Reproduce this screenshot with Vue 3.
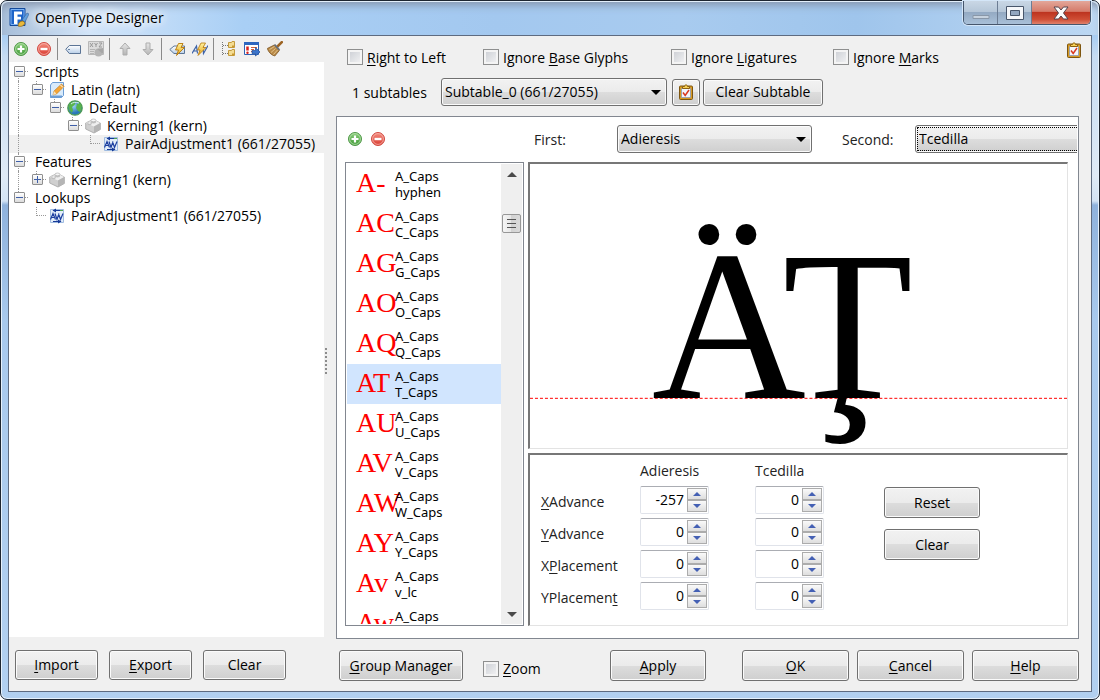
<script setup>
import { ref } from 'vue'

const tools = [
  ['add', 'Add'], ['remove', 'Remove'], null,
  ['tag', 'Rename'], ['xyz', 'Edit code'], null,
  ['up', 'Move up'], ['down', 'Move down'], null,
  ['tagflash', 'Auto tag'], ['avflash', 'Auto kern'], null,
  ['folders', 'Tree view'], ['report', 'Report'], ['broom', 'Clean up'],
]

const tree = [
  { cells: ['open start'], text: 'Scripts' },
  { cells: ['line', 'open last'], icon: 'script', text: 'Latin (latn)' },
  { cells: ['line', '', 'open last'], icon: 'globe', text: 'Default' },
  { cells: ['line', '', '', 'open last'], icon: 'brick', text: 'Kerning1 (kern)' },
  { cells: ['line', '', '', '', 'leaf last'], icon: 'pair', text: 'PairAdjustment1 (661/27055)', selected: true },
  { cells: ['open'], text: 'Features' },
  { cells: ['line', 'closed last'], icon: 'brick', text: 'Kerning1 (kern)' },
  { cells: ['open last'], text: 'Lookups' },
  { cells: ['', 'leaf last'], icon: 'pair', text: 'PairAdjustment1 (661/27055)' },
]

const flags = [
  ['', 'R', 'ight to Left'],
  ['Ignore ', 'B', 'ase Glyphs'],
  ['Ignore ', 'L', 'igatures'],
  ['Ignore ', 'M', 'arks'],
]

const pairs = [
  ['A-', 'hyphen'], ['AC', 'C_Caps'], ['AG', 'G_Caps'], ['AO', 'O_Caps'],
  ['AQ', 'Q_Caps'], ['AT', 'T_Caps'], ['AU', 'U_Caps'], ['AV', 'V_Caps'],
  ['AW', 'W_Caps'], ['AY', 'Y_Caps'], ['Av', 'v_lc'], ['Aw', 'w_lc'],
]
const selectedPair = ref(5)

const values = ref([
  { id: 'xadv', label: ['', 'X', 'Advance'], v: [-257, 0] },
  { id: 'yadv', label: ['', 'Y', 'Advance'], v: [0, 0] },
  { id: 'xpl', label: ['X', 'P', 'lacement'], v: [0, 0] },
  { id: 'ypl', label: ['YPlacemen', 't', ''], v: [0, 0] },
])
</script>

<template>
  <svg class="defs" aria-hidden="true">
    <defs>
      <linearGradient id="g-green" x2="0" y2="1"><stop stop-color="#8ccf7c" /><stop offset="1" stop-color="#3f9a36" /></linearGradient>
      <linearGradient id="g-red" x2="0" y2="1"><stop stop-color="#f58d80" /><stop offset="1" stop-color="#d83a30" /></linearGradient>
      <linearGradient id="g-grey" x2="0" y2="1"><stop stop-color="#e6e6e6" /><stop offset="1" stop-color="#b4b4b4" /></linearGradient>
      <linearGradient id="g-tag" x2="0" y2="1"><stop stop-color="#fff" /><stop offset="1" stop-color="#b9cfe8" /></linearGradient>
      <linearGradient id="g-gold" x2="0" y2="1"><stop stop-color="#fff3a0" /><stop offset="1" stop-color="#e8a414" /></linearGradient>
      <radialGradient id="g-sea" cx=".4" cy=".35"><stop stop-color="#9ed4f2" /><stop offset="1" stop-color="#2a78b8" /></radialGradient>
    </defs>
    <symbol id="add" viewBox="0 0 16 16">
      <circle cx="8" cy="8" r="6.5" fill="url(#g-green)" stroke="#4f9748" /><circle cx="8" cy="8" r="5.4" fill="none" stroke="#b9e2ae" stroke-width=".8" />
      <path d="M8 4.5v7M4.5 8h7" stroke="#fff" stroke-width="2.2" />
    </symbol>
    <symbol id="remove" viewBox="0 0 16 16">
      <circle cx="8" cy="8" r="6.5" fill="url(#g-red)" stroke="#d04a42" /><circle cx="8" cy="8" r="5.4" fill="none" stroke="#f8b5ac" stroke-width=".8" />
      <path d="M4.5 8h7" stroke="#fff" stroke-width="2.4" />
    </symbol>
    <symbol id="tag" viewBox="0 0 16 16">
      <path d="M.8 8.2 4.3 4.5h11.2v8H4.3z" fill="url(#g-tag)" stroke="#5c7596" /><path d="M3 8.5h2" stroke="#6d86a6" />
    </symbol>
    <symbol id="xyz" viewBox="0 0 16 16">
      <path d="M.5.5h15v13H.5z" fill="#dcdcdc" stroke="#b8b8b8" />
      <path d="m2 2 3 4m0-4-3 4M6.500 2 8 4m1.500-2L8 4v2M11 2h3l-3 4h3" fill="none" stroke="#999" />
      <path d="M2 8.500h5M2 10.500h4M2 12.500h4" stroke="#b5b5b5" /><circle cx="10.500" cy="11.500" r="4" fill="#b4b4b4" /><path d="m9 8 6-1v6z" fill="#a6a6a6" />
    </symbol>
    <symbol id="up" viewBox="0 0 16 16"><path d="m8 2 5 5.500h-3v6.500H6V7.500H3z" fill="url(#g-grey)" stroke="#adadad" /></symbol>
    <symbol id="down" viewBox="0 0 16 16"><path d="M8 14 3 8.500h3V2h4v6.500h3z" fill="url(#g-grey)" stroke="#adadad" /></symbol>
    <symbol id="tagflash" viewBox="0 0 16 16">
      <path d="M.8 8.500 5 5h10.500v7.500H5z" fill="url(#g-tag)" stroke="#5c7596" />
      <path d="M9.500 2.500H14L12 6.500h3.500l-8 8 2-5.500H6.500z" fill="url(#g-gold)" stroke="#b77708" stroke-width=".9" />
    </symbol>
    <symbol id="avflash" viewBox="0 0 16 16">
      <path d="M0 12.500 4.500 5l1 7.500M2 10h3.500M11 5l.5 7.500L16 4.500" fill="none" stroke="#3c62a8" stroke-width="1.200" />
      <path d="M9 2h4.500l-2.500 4.500h3l-8 8 2-5.500H5.500z" fill="url(#g-gold)" stroke="#b77708" stroke-width=".8" />
    </symbol>
    <symbol id="folders" viewBox="0 0 16 16">
      <path d="M1.500 1v13M2 4.500h6M2 12.500h6" fill="none" stroke="#777" stroke-dasharray="1 1" />
      <path d="M7.500 1.500h3l.5-1h2.500v6h-6zM7.500 9.500h3l.5-1h2.500v6h-6z" fill="#f4dc92" stroke="#c39a3c" /><path d="M11 4.500h2v2h-2zM11 12.500h2v2h-2z" fill="#c9982f" />
    </symbol>
    <symbol id="report" viewBox="0 0 16 16">
      <path d="M.5 1.500h14v12H.5z" fill="#fff" stroke="#2f62b4" /><path d="M0 1h15v3H0z" fill="#2d66bf" />
      <path d="M3.500 5.500v4" stroke="#d8201c" stroke-width="2.500" /><circle cx="3.500" cy="11.700" r="1.200" fill="#d8201c" />
      <path d="M7 6.500h6M7 8.500h3M7 10.500h2" stroke="#d2603a" /><path d="M8 9.500h3.500v-3L16 11l-4.500 4v-2.500H8z" fill="#3b74cc" stroke="#1f4b94" stroke-width=".7" />
    </symbol>
    <symbol id="broom" viewBox="0 0 16 16">
      <path d="m14.800 1.200-5 5" stroke="#9c6323" stroke-width="2.600" stroke-linecap="round" />
      <path d="m.3 7.500 7-3.500 5 5.500-4.500 5.500C4 14 1.500 11 .3 7.500z" fill="#b98a48" stroke="#7d5522" stroke-width=".8" />
      <path d="m2.500 8.500 5-3M4 11.500l4.500-4M6.500 13.500l4-4.500" stroke="#ecd09a" stroke-width=".8" /><path d="m7.500 3.500 5 5.500" stroke="#68717c" stroke-width="1.800" />
    </symbol>
    <symbol id="script" viewBox="0 0 16 16">
      <path d="M3.500.500h11v13l-2 2h-11V3z" fill="#d9ebfb" stroke="#6b9cd4" /><path d="M1 13.500h12v2H1z" fill="#6d9ed6" />
      <path d="m5 9 7.500-7 2.500 2.500L7.500 12 4 13z" fill="#f5a536" stroke="#b87820" stroke-width=".6" /><path d="m5 9 2.500 3L4 13z" fill="#f6e3bd" /><path d="m11.500 3 2.500 2.500" stroke="#fff" />
    </symbol>
    <symbol id="globe" viewBox="0 0 16 16">
      <circle cx="8" cy="8" r="7.200" fill="url(#g-sea)" stroke="#4e9a50" stroke-width="1.300" />
      <path d="M2 5c2-4 5-4 7-3L7.500 5 5 7l1 3-1 3C2.500 11 1 8 2 5zM10 4l3-1c2 3 2 6 0 9l-2-1-2-3z" fill="#58b44c" /><path d="M4 4c2-2 5-2 8-1" stroke="#d4f0f4" fill="none" />
    </symbol>
    <symbol id="brick" viewBox="0 0 16 16">
      <path d="M.7 5 8 1.500 15.300 5v6.500L9 15 .7 11z" fill="#cfcfcf" stroke="#a2a2a2" stroke-width=".8" /><path d="M.7 5 9 8.500 15.300 5 8 1.500z" fill="#efefef" />
      <path d="M9 8.500 15.300 5v6.500L9 15z" fill="#b5b5b5" /><path d="M6 2.500v2c1 1.200 4 1.200 5 0v-2zM2.500 5v1.500c1 1 3 1 4 0V5z" fill="#c2c2c2" />
      <ellipse cx="8.500" cy="2.400" rx="2.500" ry="1.400" fill="#f6f6f6" stroke="#aaa" stroke-width=".6" /><ellipse cx="4.500" cy="5" rx="2" ry="1.200" fill="#f6f6f6" stroke="#aaa" stroke-width=".6" />
    </symbol>
    <symbol id="pair" viewBox="0 0 16 16">
      <path d="M1.500 1.500h13v13h-13z" fill="#e3edf9" stroke="#9fbbe0" />
      <path d="M1.500 11.500 4 5.500l2.500 6M2.500 9.500h3M6 5.500l2 6 2-6M9.500 5.500l2 6 2.500-6" fill="none" stroke="#1d3fa0" stroke-width="1.200" />
      <path d="M4 2.500h8M4 13.500h8" stroke="#173a98" /><path d="m7 .500-3.500 2L7 4.500zM9 11.500l3.500 2-3.500 2z" fill="#173a98" /><path d="M11 2.500h3" stroke="#4da34d" />
    </symbol>
    <symbol id="clip" viewBox="0 0 16 16">
      <rect x="1.500" y="2" width="13" height="13.500" rx="1" fill="#d79a22" stroke="#7d5510" /><path d="M3.500 4.500h9v9h-9z" fill="#f3f6fc" stroke="#8a9ab8" stroke-width=".8" />
      <path d="M4.500 4.500V2.500h2C7 .300 9 .300 9.500 2.500h2v2z" fill="#f4cf57" stroke="#8c6010" /><path d="m5 8.500 2.200 3L11 6" fill="none" stroke="#da3a20" stroke-width="1.500" />
    </symbol>
  </svg>

  <div class="window">
    <header class="titlebar">
      <svg class="appicon" viewBox="0 0 20 20" aria-hidden="true">
        <path d="M1 .500h15v17H1z" fill="#1e64c8" stroke="#144a9a" /><path d="M2 1.500h13v15H2z" fill="none" stroke="#7fb4f4" />
        <path d="M5 3.500h8v3H8.500v2.200H12v2.800H8.500V16H5z" fill="#fff" />
        <path d="m13 12 5-7 2 1-4 8z" fill="#5f9fe0" stroke="#345f92" stroke-width=".6" /><path d="M9 18c0-3 2-5 5-5l2 2c-1 3-4 4-7 3z" fill="#e9b93c" stroke="#84621a" stroke-width=".7" />
      </svg>
      <h1>OpenType Designer</h1>
      <div class="wbtns">
        <button aria-label="Minimize"><svg width="18" height="6" viewBox="0 0 18 6"><path d="M1 1.500h16v3H1z" fill="#c7d2de" stroke="#8997a8" /></svg></button>
        <button class="max" aria-label="Maximize"><svg width="18" height="14" viewBox="0 0 18 14"><path d="M.5.500h17v13H.5z" fill="#f5f7fa" stroke="#48566b" /><path d="M4.500 4.500h9v5h-9z" fill="#93a7c0" stroke="#48566b" /></svg></button>
        <button class="close" aria-label="Close"><svg width="16" height="14" viewBox="0 0 16 14"><path d="M1 1h4.500L8 4l2.500-3H15l-4.500 6 4.500 6h-4.500L8 10l-2.500 3H1l4.500-6z" fill="#fbfbfb" stroke="#54434c" /></svg></button>
      </div>
    </header>

    <main class="client">
      <section class="left">
        <div class="toolbar">
          <template v-for="(t, i) in tools" :key="i">
            <button v-if="t" class="tool" :aria-label="t[1]"><svg class="i16"><use :href="'#' + t[0]" /></svg></button>
            <span v-else class="sep"></span>
          </template>
        </div>
        <ul class="tree">
          <li v-for="(n, i) in tree" :key="i" :class="{ selected: n.selected }">
            <span v-for="(c, k) in n.cells" :key="k" class="cell" :class="c"><i v-if="/open|closed/.test(c)"></i></span>
            <svg v-if="n.icon" class="i16 nodeicon"><use :href="'#' + n.icon" /></svg>
            <span class="nodetext">{{ n.text }}</span>
          </li>
        </ul>
        <div class="leftbtns">
          <button class="btn"><u>I</u>mport</button>
          <button class="btn"><u>E</u>xport</button>
          <button class="btn">Clear</button>
        </div>
      </section>

      <div class="splitter"><span></span></div>

      <section class="right">
        <div class="flags">
          <label v-for="f in flags" :key="f[1]"><input type="checkbox" /><span>{{ f[0] }}<u>{{ f[1] }}</u>{{ f[2] }}</span></label>
          <button class="tool top" aria-label="Validate"><svg class="i16"><use href="#clip" /></svg></button>
        </div>
        <div class="subrow">
          <label for="subtable">1 subtables</label>
          <div class="combo sub">
            <select id="subtable"><option>Subtable_0 (661/27055)</option></select>
            <svg class="arrow" viewBox="0 0 10 5"><path d="M0 0h10L5 5z" /></svg>
          </div>
          <button class="btn iconbtn" aria-label="Validate subtable"><svg class="i16"><use href="#clip" /></svg></button>
          <button class="btn clearsub">Clear Subtable</button>
        </div>

        <div class="panel">
          <div class="pairbar">
            <div class="pairtools">
              <button class="tool" aria-label="Add pair"><svg class="i16"><use href="#add" /></svg></button>
              <button class="tool" aria-label="Remove pair"><svg class="i16"><use href="#remove" /></svg></button>
            </div>
            <label class="firstlabel" for="first">First:</label>
            <div class="combo firstbox">
              <select id="first"><option>Adieresis</option></select>
              <svg class="arrow" viewBox="0 0 10 5"><path d="M0 0h10L5 5z" /></svg>
            </div>
            <label class="secondlabel" for="second">Second:</label>
            <div class="combo secondbox"><select id="second"><option>Tcedilla</option></select></div>
          </div>

          <div class="work">
            <div class="listbox">
              <ul>
                <li v-for="(p, i) in pairs" :key="p[0]" :class="{ selected: i === selectedPair }" @click="selectedPair = i">
                  <span class="glyphs">{{ p[0] }}</span>
                  <span class="names">A_Caps<br />{{ p[1] }}</span>
                </li>
              </ul>
              <div class="scroll">
                <button aria-label="Scroll up"><svg width="10" height="5" viewBox="0 0 10 5"><path d="M0 5h10L5 0z" /></svg></button>
                <span class="thumb"><i></i><i></i><i></i></span>
                <button class="dn" aria-label="Scroll down"><svg width="10" height="5" viewBox="0 0 10 5"><path d="M0 0h10L5 5z" /></svg></button>
              </div>
            </div>

            <div class="side">
              <div class="sunken preview">
                <svg viewBox="0 0 538 284">
                  <path class="base" d="M-2000 234.500h5000" />
                  <text x="122" y="234">Ä</text>
                  <text x="253" y="234">Ţ</text>
                </svg>
              </div>
              <div class="sunken values">
                <div class="grid">
                  <span></span><span class="head">Adieresis</span><span class="head">Tcedilla</span>
                  <template v-for="r in values" :key="r.id">
                    <label :for="r.id">{{ r.label[0] }}<u>{{ r.label[1] }}</u>{{ r.label[2] }}</label>
                    <div v-for="k in [0, 1]" :key="k" class="spin">
                      <input type="number" :id="k ? r.id + '2' : r.id" v-model="r.v[k]" :aria-label="k ? 'Tcedilla ' + r.label.join('') : null" />
                      <span class="steps">
                        <button aria-label="Increase" @click="r.v[k]++"><svg width="8" height="4" viewBox="0 0 8 4"><path d="M0 4h8L4 0z" /></svg></button>
                        <button aria-label="Decrease" @click="r.v[k]--"><svg width="8" height="4" viewBox="0 0 8 4"><path d="M0 0h8L4 4z" /></svg></button>
                      </span>
                    </div>
                  </template>
                </div>
                <div class="vbtns"><button class="btn">Reset</button><button class="btn">Clear</button></div>
              </div>
            </div>
          </div>
        </div>

        <div class="actions">
          <button class="btn gm"><u>G</u>roup Manager</button>
          <label class="zoom"><input type="checkbox" /><span><u>Z</u>oom</span></label>
          <button class="btn apply"><u>A</u>pply</button>
          <button class="btn wide"><u>O</u>K</button>
          <button class="btn wide"><u>C</u>ancel</button>
          <button class="btn wide"><u>H</u>elp</button>
        </div>
      </section>
    </main>
  </div>
</template>

<style>
body { margin: 0; background: #fff; }
</style>

<style scoped>
* { box-sizing: border-box; }
.defs { position: absolute; width: 0; height: 0; }
.window {
  height: 100vh; display: flex; flex-direction: column; padding: 0 7px 7px; border: 1px solid #1d2530; border-radius: 7px;
  background: linear-gradient(180deg, #b9d2ee 0, #a9cdf2 35px, #c6dbf2 55px, #dfeaf6 175px, #d3e3f4 200px, #8fb2dc 204px, #a8c9ed 320px, #b2d0f0 100%);
  box-shadow: inset 0 0 0 1px #e6f1fc;
  font: 14px/18px "Open Sans", "Noto Sans", sans-serif; color: #000;
}
button, input, select { font: inherit; color: inherit; margin: 0; }
button { padding: 0; }
u { text-underline-offset: 2px; text-decoration-thickness: 1px; }
.titlebar {
  flex: none; height: 34px; margin: 0 -6px; padding: 0 7px; display: flex; align-items: center; border-radius: 6px 6px 0 0;
  background: linear-gradient(90deg, #a6bdd8 0, #d2e5f9 8%, #a9cff5 22%, #a3c8ef 45%, #a8cbef 62%, #9fc5ec 78%, #bcd7f2 100%);
  box-shadow: inset 0 1px #e3effb, inset 0 9px 9px -5px #8795ac;
}
.appicon { width: 20px; height: 20px; }
h1 { margin: 0 0 0 6px; font-size: 14px; font-weight: 400; text-shadow: 0 0 8px #fff, 0 0 10px #fff, 0 0 14px #fff; }
.wbtns { margin-left: auto; align-self: flex-start; display: flex; border: 1px solid #46566c; border-top: 0; border-radius: 0 0 5px 5px; overflow: hidden; box-shadow: 0 0 0 1px #d4e6f8; }
.wbtns button { width: 34px; height: 23px; border: 0; border-right: 1px solid #6c7d94; display: grid; place-items: center; background: linear-gradient(#c9d7e5 0, #b4c5d7 50%, #94aac3 50%, #a9c0d8); }
.wbtns button:first-child { padding-top: 8px; }
.wbtns .close { width: 58px; border: 0; background: linear-gradient(#e3a79a 0, #d57b6a 45%, #bd3420 50%, #cf4e35 80%, #e0826c); }
.client { flex: 1; min-height: 0; display: flex; background: #f0f0f0; border: 1px solid #5e6b80; }
.i16 { display: block; width: 16px; height: 16px; flex: none; }
.tool { border: 0; background: none; width: 16px; height: 16px; flex: none; }

.left { flex: 0 0 315px; display: flex; flex-direction: column; }
.toolbar { height: 26px; display: flex; align-items: center; padding-left: 4px; flex: none; }
.toolbar .tool { margin-right: 7px; }
.sep { width: 1px; height: 22px; margin: 0 7px 0 -2px; background: #8a8a8a; }
.tree { flex: 1; margin: 0; padding: 1px 0 0; list-style: none; background: #fff; }
.tree li { display: flex; height: 18px; padding-left: 1px; align-items: center; }
.tree li.selected { background: #f0f0f0; }
.cell { width: 18px; height: 18px; position: relative; }
.cell.line::before, .cell.open::before, .cell.closed::before, .cell.leaf::before { content: ""; position: absolute; left: 8px; top: 0; bottom: 0; border-left: 1px dotted #999; }
.cell.last::before { bottom: 9px; }
.cell.start::before { top: 9px; }
.cell.open::after, .cell.closed::after, .cell.leaf::after { content: ""; position: absolute; left: 9px; right: 0; top: 8px; border-top: 1px dotted #999; }
.cell i { position: absolute; z-index: 1; left: 4px; top: 3px; width: 11px; height: 11px; border: 1px solid #8f8f8f; border-radius: 1px; background: linear-gradient(#3f5fa8, #3f5fa8) center / 7px 1px no-repeat, linear-gradient(#fff, #dcdcdc); }
.cell.closed i { background: linear-gradient(#3f5fa8, #3f5fa8) center / 7px 1px no-repeat, linear-gradient(#3f5fa8, #3f5fa8) center / 1px 7px no-repeat, linear-gradient(#fff, #dcdcdc); }
.nodeicon { margin: 0 -1px 0 3px; }
.nodetext { margin-left: 7px; white-space: nowrap; }
.leftbtns { display: flex; gap: 11px; padding: 13px 6px 11px; }
.btn { height: 31px; border: 1px solid #707070; border-radius: 3px; background: linear-gradient(#f2f2f2, #ebebeb 50%, #dddddd 50%, #cfcfcf); box-shadow: inset 0 0 0 1px #fbfbfb; white-space: nowrap; }
.leftbtns .btn { width: 83px; height: 30px; }

.splitter { flex: 0 0 12px; display: flex; align-items: center; padding: 0 0 6px 1px; }
.splitter span { width: 2px; height: 26px; background: repeating-linear-gradient(#8c8c8c 0 2px, #f0f0f0 2px 4px); }

.right { flex: 1; min-width: 0; display: flex; flex-direction: column; padding-right: 12px; }
.flags { display: grid; grid-template-columns: 136px 188px 162px 1fr 16px; align-items: center; height: 36px; margin: 6px -3px 0 0; padding: 0 0 6px 11px; }
label { white-space: nowrap; }
.flags label, .zoom { display: flex; align-items: center; gap: 4px; }
.flags label span { padding-top: 1px; }
.top { align-self: start; }
input[type="checkbox"] { appearance: none; flex: none; width: 16px; height: 16px; border: 1px solid #8e8f8f; background: linear-gradient(135deg, #c9ccd2, #f5f5f6); box-shadow: inset 0 0 0 2px #f4f4f4; }
.subrow { display: flex; align-items: center; height: 28px; padding-left: 16px; flex: none; }
.subrow label { width: 89px; padding-top: 2px; }
.sub { width: 226px; margin-right: 5px; }
.combo { position: relative; height: 28px; }
select { appearance: none; width: 100%; height: 28px; padding: 0 20px 0 3px; border: 1px solid #707070; border-radius: 3px; background: linear-gradient(#f2f2f2, #ebebeb 50%, #dddddd 50%, #cfcfcf); box-shadow: inset 0 0 0 1px #fbfbfb; }
.arrow { position: absolute; right: 6px; top: 12px; width: 10px; height: 5px; pointer-events: none; }
.subrow .btn { height: 27px; }
.iconbtn { width: 28px; display: grid; place-items: center; margin-right: 3px; }
.clearsub { width: 120px; }

.panel { flex: 1; min-height: 0; margin-top: 10px; display: flex; flex-direction: column; background: #fff; border: 1px solid #828790; padding: 8px 0 12px 8px; }
.pairbar { display: flex; align-items: center; height: 28px; flex: none; padding-right: 1px; }
.pairtools { display: flex; gap: 7px; width: 189px; padding-left: 2px; }
.firstlabel { width: 83px; padding-top: 2px; color: #222; }
.firstbox { width: 195px; }
.secondlabel { width: 73px; margin-left: 30px; padding-top: 2px; color: #222; }
.secondbox { flex: 1; min-width: 0; overflow: hidden; }
.secondbox select { width: calc(100% + 8px); outline: 1px dotted #000; outline-offset: -3px; }
.work { flex: 1; min-height: 0; margin: 9px 10px 0 0; display: flex; gap: 4px; }
.listbox { flex: 0 0 179px; display: flex; border: 1px solid #828790; padding: 1px; overflow: hidden; }
.listbox ul { flex: 1; margin: 0; padding: 0; list-style: none; overflow: hidden; }
.listbox li { display: flex; height: 40px; padding: 4px 0 0 9px; overflow: hidden; }
.listbox li.selected { background: #d1e5fe; }
.glyphs { width: 39px; flex: none; font: 28px/30px "Liberation Serif", serif; color: #f00; white-space: nowrap; }
.names { font: 13px/16px "Noto Sans", "Open Sans", sans-serif; white-space: nowrap; }
.scroll { flex: 0 0 21px; background: #efefef; display: flex; flex-direction: column; align-items: center; }
.scroll button { border: 0; background: none; width: 19px; height: 20px; display: grid; place-items: center; }
.scroll path { fill: #4a4a4a; }
.dn { margin-top: auto; }
.thumb { width: 19px; height: 19px; margin-top: 30px; border: 1px solid #979797; border-radius: 2px; background: linear-gradient(90deg, #f5f5f5, #e6e6e6 50%, #d2d2d2 50%, #dadada); display: flex; flex-direction: column; align-items: center; justify-content: center; gap: 3px; }
.thumb i { width: 9px; height: 1px; background: #555; }
.side { flex: 1; min-width: 0; display: flex; flex-direction: column; gap: 4px; }
.sunken { border: 2px solid #777; border-right: 1px solid #e3e3e3; border-bottom: 1px solid #e3e3e3; }
.preview { flex: 1; min-height: 0; }
.preview svg { display: block; width: 100%; height: 100%; }
.preview text { font: 214px "Liberation Serif", serif; }
.base { stroke: #f00; stroke-dasharray: 3 2; }
.values { flex: 0 0 173px; display: flex; padding: 5px 0 0 11px; }
.grid { display: grid; grid-template-columns: 99px 115px 69px; grid-template-rows: 24px repeat(4, 32px); align-items: center; align-content: start; color: #222; }
.head { padding-bottom: 2px; }
.grid label { padding-top: 4px; }
.spin { width: 69px; height: 28px; display: flex; border: 1px solid #e0e3ea; border-top-color: #abadb3; border-radius: 2px; color: #000; }
.spin input { appearance: textfield; width: 46px; height: 26px; padding: 0 3px 2px 0; border: 0; background: none; text-align: right; outline: 0; }
.spin input::-webkit-inner-spin-button { appearance: none; margin: 0; }
.steps { width: 20px; margin: 1px 0; display: flex; flex-direction: column; }
.steps button { flex: 1; border: 1px solid #acacac; background: linear-gradient(#fafafa, #dedede); display: grid; place-items: center; line-height: 0; min-height: 0; }
.steps path { fill: #4460b4; }
.vbtns { margin-left: 60px; padding-top: 27px; display: flex; flex-direction: column; gap: 11px; }
.vbtns .btn { width: 96px; }
.actions { display: flex; padding: 11px 0 10px 3px; flex: none; }
.gm { width: 124px; }
.zoom { margin: 6px auto 0 20px; height: 25px; }
.apply { width: 96px; margin-right: 28px; }
.wide { width: 107px; margin-left: 8px; }
</style>
